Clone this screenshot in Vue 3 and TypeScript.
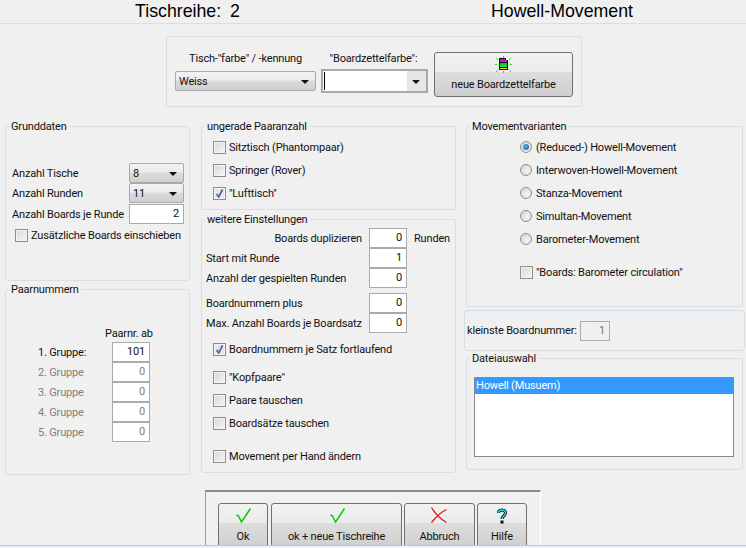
<script setup lang="ts">
const movements = [
  { label: '(Reduced-) Howell-Movement', on: true },
  { label: 'Interwoven-Howell-Movement', on: false },
  { label: 'Stanza-Movement', on: false },
  { label: 'Simultan-Movement', on: false },
  { label: 'Barometer-Movement', on: false },
]
const groups = [
  { label: '1. Gruppe:', value: '101', off: false },
  { label: '2. Gruppe', value: '0', off: true },
  { label: '3. Gruppe', value: '0', off: true },
  { label: '4. Gruppe', value: '0', off: true },
  { label: '5. Gruppe', value: '0', off: true },
]
</script>

<template>
  <div class="window">
    <header class="titlebar">
      <div class="title t1">Tischreihe: 2</div>
      <div class="title t2">Howell-Movement</div>
    </header>

    <div class="colorbar">
      <div class="colorcol c1">
        <div class="collabel">Tisch-"farbe" / -kennung</div>
        <div class="select wide"><span>Weiss</span><i class="arrow"></i></div>
      </div>
      <div class="colorcol c2">
        <div class="collabel">"Boardzettelfarbe":</div>
        <div class="combo"><div class="combofield"><b class="caret"></b></div><i class="arrow"></i></div>
      </div>
      <div class="btn colorbtn">
        <svg class="ico" width="19" height="18" viewBox="0 0 19 18" shape-rendering="crispEdges">
          <path d="M9 0h1v2H9zM9 15h1v2H9zM1 8h2v1H1zM16 8h2v1h-2zM2 2h1v1H2zM3 3h1v1H3zM16 2h1v1h-1zM15 3h1v1h-1zM2 15h1v1H2zM3 14h1v1H3zM16 15h1v1h-1zM15 14h1v1h-1z" fill="#1aee1a"/>
          <path d="M5 2h7l2 2v10H5z" fill="#111"/>
          <path d="M12 2h1v1h1v1h-2z" fill="#fff"/>
          <rect x="6" y="3" width="5" height="1" fill="#e8105a"/>
          <rect x="6" y="4" width="7" height="2" fill="#c018c8"/>
          <rect x="6" y="7" width="7" height="2" fill="#18c018"/>
          <rect x="6" y="9" width="7" height="2" fill="#10e060"/>
          <rect x="6" y="12" width="7" height="1" fill="#eedc20"/>
        </svg>
        <span class="btxt">neue Boardzettelfarbe</span>
      </div>
    </div>

    <main class="cols">
      <div class="col left">
        <fieldset class="grunddaten">
          <legend>Grunddaten</legend>
          <div class="body">
            <div class="row r-sel"><span class="lab">Anzahl Tische</span><div class="select small"><span>8</span><i class="arrow"></i></div></div>
            <div class="row r-sel"><span class="lab">Anzahl Runden</span><div class="select small"><span>11</span><i class="arrow"></i></div></div>
            <div class="row r-inp"><span class="lab">Anzahl Boards je Runde</span><div class="input w55">2</div></div>
            <label class="check extra"><i class="box"></i>Zusätzliche Boards einschieben</label>
          </div>
        </fieldset>
        <fieldset class="paar">
          <legend>Paarnummern</legend>
          <div class="paarhead">Paarnr. ab</div>
          <div v-for="g in groups" :key="g.label" class="row grp" :class="{ off: g.off }">
            <span class="grplab">{{ g.label }}</span>
            <div class="input w38">{{ g.value }}</div>
          </div>
        </fieldset>
      </div>

      <div class="col mid">
        <fieldset class="ungerade">
          <legend>ungerade Paaranzahl</legend>
          <div class="body">
            <label class="check c23"><i class="box"></i>Sitztisch (Phantompaar)</label>
            <label class="check c23"><i class="box"></i>Springer (Rover)</label>
            <label class="check c23"><i class="box on"><svg width="11" height="11" viewBox="0 0 11 11"><path d="M2.500 6l2.200 3L8.500 1.500" fill="none" stroke="#4a63b4" stroke-width="1.700"/></svg></i>"Lufttisch"</label>
          </div>
        </fieldset>
        <fieldset class="weitere">
          <legend>weitere Einstellungen</legend>
          <div class="body">
            <div class="row"><span class="lab lab-r">Boards duplizieren</span><div class="input w38">0</div><span class="unit">Runden</span></div>
            <div class="row"><span class="lab">Start mit Runde</span><div class="input w38">1</div></div>
            <div class="row"><span class="lab">Anzahl der gespielten Runden</span><div class="input w38">0</div></div>
            <div class="row gap5"><span class="lab">Boardnummern plus</span><div class="input w38">0</div></div>
            <div class="row"><span class="lab">Max. Anzahl Boards je Boardsatz</span><div class="input w38">0</div></div>
            <label class="check c-fort"><i class="box on"><svg width="11" height="11" viewBox="0 0 11 11"><path d="M2.500 6l2.200 3L8.500 1.500" fill="none" stroke="#4a63b4" stroke-width="1.700"/></svg></i>Boardnummern je Satz fortlaufend</label>
            <label class="check c-kopf"><i class="box"></i>"Kopfpaare"</label>
            <label class="check c23"><i class="box"></i>Paare tauschen</label>
            <label class="check c23"><i class="box"></i>Boardsätze tauschen</label>
            <label class="check c-hand"><i class="box"></i>Movement per Hand ändern</label>
          </div>
        </fieldset>
      </div>

      <div class="col right">
        <fieldset class="moves">
          <legend>Movementvarianten</legend>
          <div class="body">
            <label v-for="m in movements" :key="m.label" class="check c23"><i class="dot" :class="{ on: m.on }"></i>{{ m.label }}</label>
            <label class="check baro"><i class="box"></i>"Boards: Barometer circulation"</label>
          </div>
        </fieldset>
        <div class="smallest">
          <span class="smalllab">kleinste Boardnummer:</span>
          <div class="input dis">1</div>
        </div>
        <fieldset class="datei">
          <legend>Dateiauswahl</legend>
          <div class="list"><div class="sel">Howell (Musuem)</div></div>
        </fieldset>
      </div>
    </main>

    <footer class="footer">
      <div class="panel">
        <div class="btn b-ok">
          <svg class="ico" width="18" height="18" viewBox="0 0 18 18"><path d="M2.500 8l2 1 3 6L16.500 1.500" fill="none" stroke="#0c0" stroke-width="1.400"/></svg>
          <span class="btxt">Ok</span>
        </div>
        <div class="btn b-next">
          <svg class="ico" width="19" height="18" viewBox="0 0 19 18"><path d="M3.500 8l2 1 3 6L17.500 1.500" fill="none" stroke="#0c0" stroke-width="1.400"/></svg>
          <span class="btxt">ok + neue Tischreihe</span>
        </div>
        <div class="btn b-abbr">
          <svg class="ico" width="19" height="18" viewBox="0 0 19 18"><path d="M1.500 0.500C5 6 10 12 16.500 15.500M16.500 2.500C11 5 6 10 1.500 15.500" fill="none" stroke="#d81818" stroke-width="1.300"/></svg>
          <span class="btxt">Abbruch</span>
        </div>
        <div class="btn b-help">
          <svg class="ico" width="18" height="18" viewBox="0 0 18 18"><path d="M5.500 6C5.500 2 12.500 2 12.500 6 12.500 9 9 9 9 12" fill="none" stroke="#111" stroke-width="3"/><path d="M5.500 6C5.500 2 12.500 2 12.500 6 12.500 9 9 9 9 12" fill="none" stroke="#1fe0e0" stroke-width="1.400"/><rect x="7.500" y="13.500" width="3" height="3" fill="#111"/></svg>
          <span class="btxt">Hilfe</span>
        </div>
      </div>
    </footer>
    <div class="bottomline"></div>
  </div>
</template>

<style>
html, body { margin: 0; background: #f0f0f0; }
</style>

<style scoped>
.window {
  width: 746px; height: 548px; overflow: hidden; position: relative;
  background: #f0f0f0; color: #111;
  font: 11px/13px Roboto, "Noto Sans", sans-serif;
  letter-spacing: -0.170px;
  box-sizing: border-box;
}
.titlebar { height: 23px; display: flex; border-bottom: 1px solid #d6dfe6; }
.title { flex: none; font: 17.750px/22px "Liberation Sans", sans-serif; letter-spacing: 0; color: #000; text-align: center; }
.t1 { width: 375px; word-spacing: 4px; }
.t2 { width: 374px; }

.colorbar {
  margin: 12px 0 0 166px; width: 416px; height: 71px; box-sizing: border-box;
  border: 1px solid #d6dfe6; border-radius: 3px; display: flex;
}
.colorcol { display: flex; flex-direction: column; align-items: center; }
.collabel { height: 13px; margin-bottom: 6px; white-space: nowrap; }
.c1 { width: 141px; margin: 15px 0 0 8px; }
.c2 { width: 107px; margin: 15px 0 0 5px; }
.c2 .collabel { margin-bottom: 4px; padding-right: 2px; }

.select {
  box-sizing: border-box; height: 20px; position: relative; display: flex; align-items: center;
  padding-left: 3px; border: 1px solid #a9a9a9; border-radius: 2px;
  background: linear-gradient(#f2f2f2 0, #ebebeb 45%, #dcdcdc 50%, #cfcfcf 100%);
}
.wide { width: 141px; }
.small { width: 55px; }
.arrow {
  position: absolute; right: 6px; top: 50%; margin-top: -1px;
  border: 4px solid transparent; border-top: 4px solid #111; border-bottom: 0;
}
.combo {
  box-sizing: border-box; width: 107px; height: 24px; position: relative;
  border: 2px solid #a9a9a9; background: #e6e6e6;
}
.combofield { width: 84px; height: 20px; background: #fff; position: relative; }
.caret { position: absolute; left: 1px; top: 1px; width: 1px; height: 18px; background: #000; }

.btn {
  box-sizing: border-box; border: 1px solid #707070; border-radius: 3px;
  display: flex; flex-direction: column; align-items: center; overflow: hidden;
  background: linear-gradient(#f2f2f2 0, #ebebeb 44%, #dddddd 45%, #cfcfcf 100%);
}
.colorbtn { width: 139px; height: 45px; margin: 15px 0 0 6px; }
.colorbtn .ico { margin-top: 3px; }
.colorbtn .btxt { margin-top: 4px; }
.ico { flex: none; display: block; }
.btxt { white-space: nowrap; }

.cols { display: flex; margin-top: 13px; }
.col { display: flex; flex-direction: column; }
.left { width: 185px; margin-left: 5px; }
.mid { width: 255px; margin-left: 11px; }
.right { width: 277px; margin-left: 10px; }

fieldset {
  margin: 0; padding: 0; min-width: 0; box-sizing: border-box;
  border: 1px solid #d6dfe6; border-radius: 3px;
}
legend { margin-left: 3px; padding: 0 2px; line-height: 13px; height: 13px; }

.row { display: flex; align-items: center; height: 20px; }
.lab { white-space: nowrap; }
.input {
  box-sizing: border-box; height: 20px; background: #fff; border: 1px solid #aaa;
  text-align: right; padding-right: 4px; line-height: 18px;
}
.w38 { width: 38px; flex: none; }
.w55 { width: 55px; flex: none; }

.check { display: flex; align-items: center; height: 14px; white-space: nowrap; }
.box {
  box-sizing: border-box; width: 13px; height: 13px; margin-right: 3px; flex: none;
  border: 1px solid #8e8e8e; display: flex; align-items: center; justify-content: center;
  background: linear-gradient(135deg, #d6d6d6, #f6f6f6);
  box-shadow: inset 0 0 0 1px #f4f4f4;
}
.box.on { background: #e6e6e6; }

.grunddaten { height: 161px; padding-top: 30px; }
.grunddaten .body { padding: 0 5px 0 6px; }
.r-sel { justify-content: space-between; }
.r-sel .lab { padding-top: 1px; }
.r-inp { justify-content: space-between; margin-top: 1px; }
.extra { margin: 4px 0 0 3px; }

.paar { height: 192px; margin-top: 2px; }
.paarhead { margin: 31px 0 2px 99px; }
.grp { padding-left: 32px; }
.grplab { width: 74px; }
.grp.off { color: #808080; }

.ungerade { height: 90px; padding-top: 7px; }
.ungerade .body { padding-left: 11px; }
.c23 { margin-bottom: 9px; }
.weitere { height: 260px; margin-top: 3px; padding-top: 2px; }
.weitere .body { padding-left: 4px; }
.weitere .lab { width: 163px; }
.weitere .lab-r { width: 156px; margin-right: 7px; text-align: right; }
.unit { margin-left: 7px; }
.gap5 { margin-top: 5px; }
.weitere .check { margin-left: 7px; }
.weitere .c-fort { margin-top: 9px; }
.weitere .c-kopf { margin-top: 14px; margin-bottom: 9px; }
.weitere .c-hand { margin-top: 19px; }

.moves { height: 187px; padding-top: 7px; }
.moves .body { padding-left: 53px; }
.dot {
  box-sizing: border-box; width: 12px; height: 12px; border-radius: 50%; margin-right: 4px; flex: none;
  border: 1px solid #8f8f8f; background: radial-gradient(circle at 60% 60%, #f6f6f6, #cfcfcf);
  position: relative;
}
.dot.on::after {
  content: ""; position: absolute; left: 2px; top: 2px; width: 6px; height: 6px; border-radius: 50%;
  background: radial-gradient(circle at 40% 40%, #4fb3e6, #0b5a94);
}
.moves .baro { margin-top: 19px; }

.smallest {
  box-sizing: border-box; height: 41px; margin: 3px 0 0 -2px; width: 281px;
  border: 1px solid #d6dfe6; border-radius: 3px;
  display: flex; align-items: center; padding-left: 2px;
}
.smalllab { width: 113px; white-space: nowrap; }
.dis { width: 30px; background: #f0f0f0; color: #777; }

.datei { height: 118px; margin-top: 1px; }
.list {
  box-sizing: border-box; width: 260px; height: 80px; margin: 12px 0 0 7px;
  background: #fff; border: 1px solid #888;
}
.sel { height: 16px; line-height: 16px; background: #3399ff; color: #fff; padding-left: 1px; }

.footer { margin: 15px 0 0 205px; }
.panel {
  box-sizing: border-box; width: 336px; height: 60px; padding: 11px 0 0 12px; display: flex; gap: 2px;
  border-top: 2px solid #8c8c8c; border-left: 1px solid #9a9a9a; border-right: 1px solid #fff;
}
.panel .btn { height: 45px; }
.panel .ico { margin-top: 3px; }
.panel .btxt { margin-top: 5px; }
.b-ok { width: 50px; }
.b-next { width: 131px; margin-left: 1px; }
.b-abbr { width: 71px; }
.b-help { width: 50px; }
.bottomline {
  position: absolute; left: 0; right: 0; top: 545px; height: 3px; background: #eaf1f8;
  border-top: 1px solid #b9c9dc; box-sizing: border-box;
}
</style>
